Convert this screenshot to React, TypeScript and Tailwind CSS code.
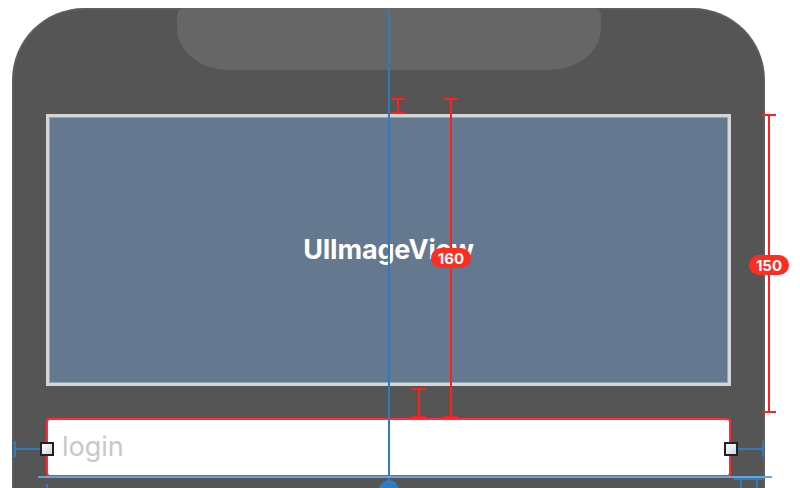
import React from 'react';

const red = 'bg-[#ff1f1f]';

function VMeasure({ x, top, bottom }: { x: number; top: number; bottom: number }) {
  return (
    <div
      className="absolute flex flex-col items-center"
      style={{ left: x - 7, top, height: bottom - top, width: 14 }}
    >
      <div className={`h-[2px] w-[14px] ${red}`} />
      <div className={`w-[2px] flex-1 ${red}`} />
      <div className={`h-[2px] w-[14px] ${red}`} />
    </div>
  );
}

function Badge({ x, y, label }: { x: number; y: number; label: string }) {
  return (
    <div
      className="absolute flex h-[20px] w-[40px] items-center justify-center rounded-full bg-[#ff2d1f] text-[15px] font-bold leading-none text-white"
      style={{ left: x - 20, top: y - 10 }}
    >
      {label}
    </div>
  );
}

// blue horizontal guide with end caps, left of / right of the login field
function SideGuide({ flip }: { flip?: boolean }) {
  return (
    <div className={`flex w-[40px] items-center ${flip ? 'flex-row-reverse' : ''}`}>
      <div className="h-[16px] w-[2px] bg-[#2f7bc2]" />
      <div className="h-[2px] flex-1 bg-[#2f7bc2]" />
      <div className="h-[14px] w-[14px] shrink-0 border-2 border-[#222] bg-gradient-to-br from-[#ffffff] to-[#cfd6e0]" />
    </div>
  );
}

export default function App() {
  return (
    <div
      className="relative h-[488px] w-[800px] overflow-hidden bg-white"
      style={{ fontFamily: 'Inter, "Liberation Sans", sans-serif' }}
    >
      <div className="ml-[12px] mt-[8px] flex h-[480px] w-[753px] flex-col rounded-t-[72px] border-x-2 border-t-2 border-[#5d5d5d] bg-[#555555]">
        <div className="mx-auto -mt-[2px] h-[62px] w-[424px] rounded-b-[52px_42px] rounded-t-[8px] bg-[#666666]" />
        <div className="px-[32px] pt-[44px]">
          <div className="flex h-[272px] items-center justify-center border-[3px] border-[#d5d5d5] bg-[#647890] shadow-[inset_0_0_0_1px_#9aa5b3]">
            <span className="text-[27px] font-bold tracking-[-0.2px] text-white">UIImageView</span>
          </div>
          <div className="mt-[32px] flex h-[59px] items-center rounded-[4px] border-2 border-[#ff2a3a] bg-white pl-[14px]">
            <span className="text-[27px] text-[#c7c7cc]">login</span>
          </div>
        </div>
      </div>

      {/* login side guides and resize handles */}
      <div className="absolute left-[14px] top-[441px] flex w-[750px] justify-between">
        <SideGuide />
        <SideGuide flip />
      </div>

      {/* vertical center guide */}
      <div className="absolute left-[388px] top-[10px] h-[478px] w-[2px] bg-[#2f7bc2]" />
      <div className="absolute left-[379px] top-[480px] h-[20px] w-[20px] rounded-full bg-[#2f7bc2]" />

      {/* bottom guide */}
      <div className="absolute left-[38px] top-[476px] h-[2px] w-[734px] bg-[#6aa2de]" />
      <div className="absolute left-[46px] top-[484px] h-[4px] w-[2px] bg-[#2f7bc2]" />
      <div className="absolute left-[734px] top-[478px] flex h-[10px] w-[30px] flex-col">
        <div className="h-[2px] bg-[#2f7bc2]" />
        <div className="flex flex-1 justify-between px-[6px]">
          <div className="w-[2px] bg-[#2f7bc2]" />
          <div className="w-[2px] bg-[#2f7bc2]" />
        </div>
      </div>

      {/* red constraints */}
      <VMeasure x={398} top={98} bottom={114} />
      <VMeasure x={451} top={98} bottom={418} />
      <VMeasure x={419} top={388} bottom={418} />
      <VMeasure x={769} top={114} bottom={413} />
      <Badge x={451} y={258} label="160" />
      <Badge x={769} y={265} label="150" />
    </div>
  );
}
